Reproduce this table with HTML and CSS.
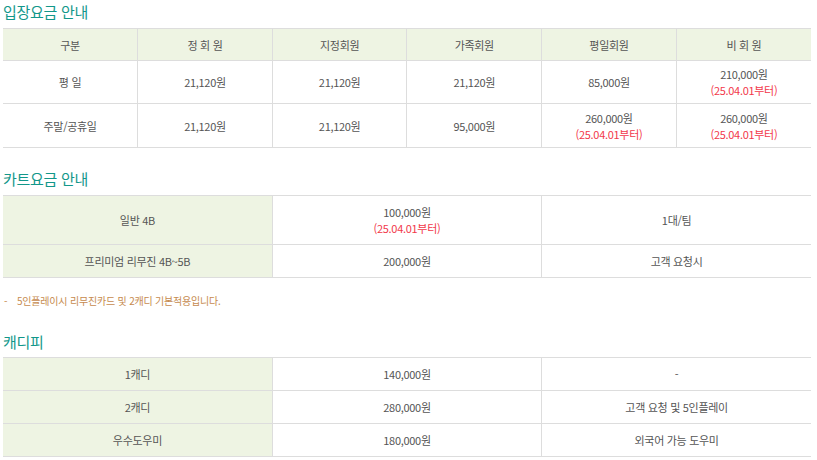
FILE: index.html
```html
<!DOCTYPE html>
<html lang="ko">
<head>
<meta charset="utf-8">
<link rel="stylesheet" href="styles.css">
</head>
<body>
<div class="wrap">
  <h2 class="title t1">입장요금 안내</h2>
  <table class="fee">
    <tr class="hd">
      <th>구분</th><th>정 회 원</th><th>지정회원</th><th>가족회원</th><th>평일회원</th><th>비 회 원</th>
    </tr>
    <tr class="r1">
      <td>평 일</td><td>21,120원</td><td>21,120원</td><td>21,120원</td><td>85,000원</td><td>210,000원<br><span class="red">(25.04.01부터)</span></td>
    </tr>
    <tr class="r2">
      <td>주말/공휴일</td><td>21,120원</td><td>21,120원</td><td>95,000원</td><td>260,000원<br><span class="red">(25.04.01부터)</span></td><td>260,000원<br><span class="red">(25.04.01부터)</span></td>
    </tr>
  </table>

  <h2 class="title t2">카트요금 안내</h2>
  <table class="fee three">
    <tr class="r3">
      <th>일반 4B</th><td>100,000원<br><span class="red">(25.04.01부터)</span></td><td>1대/팀</td>
    </tr>
    <tr class="rs">
      <th>프리미엄 리무진 4B~5B</th><td>200,000원</td><td>고객 요청시</td>
    </tr>
  </table>
  <p class="note"><span class="dash">-</span>5인플레이시 리무진카드 및 2캐디 기본적용입니다.</p>

  <h2 class="title t3">캐디피</h2>
  <table class="fee three">
    <tr class="rs">
      <th>1캐디</th><td>140,000원</td><td>-</td>
    </tr>
    <tr class="rs">
      <th>2캐디</th><td>280,000원</td><td>고객 요청 및 5인플레이</td>
    </tr>
    <tr class="rs">
      <th>우수도우미</th><td>180,000원</td><td>외국어 가능 도우미</td>
    </tr>
  </table>
</div>
</body>
</html>
```
FILE: styles.css
```css
* { box-sizing: border-box; }
html, body { margin: 0; padding: 0; background: #fff; }
body {
  font-family: "Noto Sans CJK KR", "Noto Sans", sans-serif;
  color: #555;
}
.wrap {
  width: 808px;
  margin-left: 3px;
  padding-top: 1px;
}
.title {
  margin: 0;
  font-size: 15px;
  font-weight: 400;
  line-height: 20px;
  color: #12978a;
  letter-spacing: -0.3px;
}
.t1 { margin-top: 1px; margin-bottom: 6px; }
.t2 { margin-top: 21px; margin-bottom: 6px; }
.t3 { margin-top: 24px; margin-bottom: 5px; }
.fee {
  width: 808px;
  border-collapse: collapse;
  table-layout: fixed;
  font-size: 11px;
  line-height: 16px;
  letter-spacing: -0.3px;
  border-top: 1px solid #dcdcdc;
}
.fee th, .fee td {
  border: 1px solid #dddddd;
  text-align: center;
  vertical-align: middle;
  padding: 0;
  font-weight: 400;
  color: #555;
}
.fee tr > :first-child { border-left: none; }
.fee tr > :last-child { border-right: none; }
.fee th { background: #eef4e3; }
.fee .hd th { height: 32px; }
.fee .r1 td { height: 43px; }
.fee .r2 td { height: 44px; }
.fee .r3 > * { height: 49px; }
.fee .rs > * { height: 33px; }
.red { color: #f2384a; }
.note {
  margin: 16px 0 0 0;
  font-size: 10px;
  line-height: 14px;
  color: #c68a4e;
  letter-spacing: -0.2px;
}
.dash { display: inline-block; width: 14px; padding-left: 1px; }
```
